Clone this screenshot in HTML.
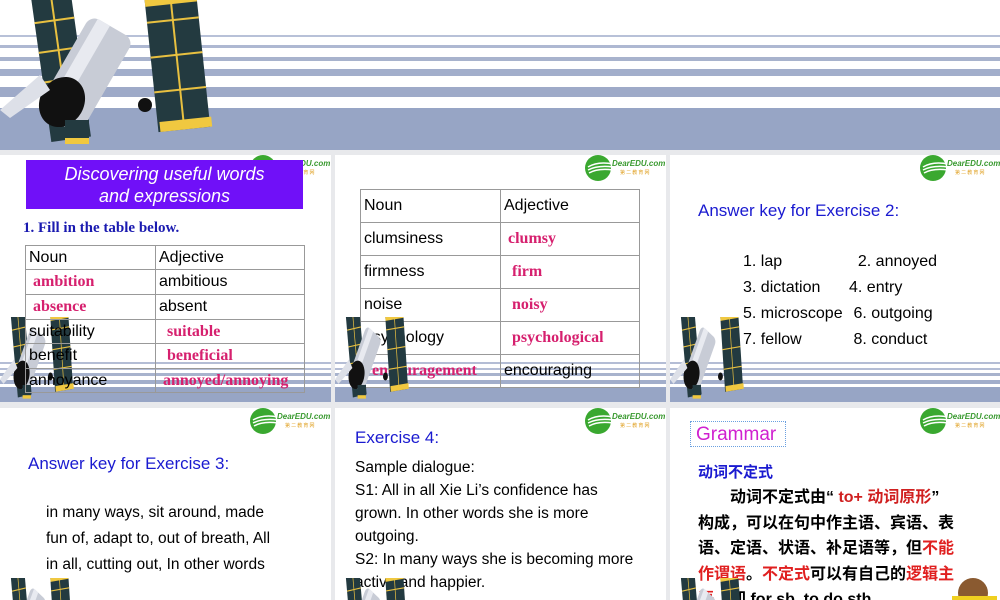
<!DOCTYPE html>
<html><head><meta charset="utf-8"><style>
*{margin:0;padding:0;box-sizing:border-box}
html,body{width:1000px;height:600px;overflow:hidden}
body{background:#e8e9ec;position:relative;font-family:"Liberation Sans","Noto Sans CJK SC",sans-serif}
.a{position:absolute}
.slide{position:absolute;background:#fff;overflow:hidden;width:331px}
.band{position:absolute;left:0;width:331px;top:207px;height:40px;
background:linear-gradient(#fff 0,#fff 0px,#b4bdd5 0px,#b4bdd5 2px,#fff 2px,#fff 6px,#b4bdd5 6px,#b4bdd5 8px,#fff 8px,#fff 11px,#a8b3cd 11px,#a8b3cd 14px,#fff 14px,#fff 18px,#a2aecb 18px,#a2aecb 22px,#fff 22px,#fff 25px,#97a5c5 25px)}
.t{color:#000;font-size:16px}
.r{color:#d6206e;font-family:"Liberation Serif",serif;font-weight:bold;font-size:16px}
table{border-collapse:collapse;position:absolute}
td{border:1px solid #999;padding:0 3px;vertical-align:middle;font-size:16px;white-space:nowrap}
.logo{position:absolute;width:82px;height:28px}
.blue{color:#1a1ad0}
</style></head><body>
<svg width="0" height="0" style="position:absolute"><defs>
<g id="sat">
<rect x="40" y="-10" width="40" height="150" fill="#233a40" transform="rotate(-8 60 60)"/>
<g transform="rotate(-8 60 60)" stroke="#e8c040" stroke-width="2"><line x1="40" y1="20" x2="80" y2="20"/><line x1="40" y1="50" x2="80" y2="50"/><line x1="40" y1="80" x2="80" y2="80"/><line x1="40" y1="110" x2="80" y2="110"/><line x1="60" y1="-10" x2="60" y2="140"/></g>
<rect x="40" y="-20" width="42" height="14" fill="#f0c840" transform="rotate(-8 60 60)"/>
<rect x="150" y="-30" width="52" height="160" fill="#233a40" transform="rotate(-6 175 50)"/>
<g transform="rotate(-6 175 50)" stroke="#e8c040" stroke-width="2"><line x1="150" y1="20" x2="202" y2="20"/><line x1="150" y1="55" x2="202" y2="55"/><line x1="150" y1="90" x2="202" y2="90"/><line x1="176" y1="-30" x2="176" y2="130"/></g>
<rect x="150" y="-10" width="52" height="14" fill="#f0c840" transform="rotate(-6 175 50)"/>
<rect x="152" y="120" width="52" height="10" fill="#f0c840" transform="rotate(-6 175 50)"/>
<rect x="60" y="20" width="50" height="110" rx="10" fill="#c8ccd6" transform="rotate(30 85 75)"/>
<rect x="68" y="20" width="14" height="110" fill="#e8eaf0" transform="rotate(30 85 75)"/>
<ellipse cx="62" cy="102" rx="22" ry="26" fill="#111" transform="rotate(30 62 102)"/>
<polygon points="0,110 40,75 50,90 10,118" fill="#dde0e8"/>
<rect x="65" y="120" width="24" height="22" fill="#233a40"/><rect x="65" y="138" width="24" height="6" fill="#f0c840"/>
<circle cx="145" cy="105" r="7" fill="#111"/>
</g>
<g id="lg">
<circle cx="13" cy="13" r="13" fill="#3aa830"/>
<path d="M3 12 Q13 6 28 9 M3 15 Q13 10 28 12 M4 18 Q13 13 28 15" stroke="#fff" stroke-width="1.5" fill="none"/>
<text x="27" y="11" font-family="Liberation Sans" font-size="8" font-weight="bold" font-style="italic" fill="#3a9a30">DearEDU.com</text>
<text x="35" y="19" font-family="Noto Sans CJK SC" font-size="5" fill="#e0a020">第 二 教 育 网</text>
</g>
</defs></svg>

<div class="a" style="left:0;top:0;width:1000px;height:150px;background:linear-gradient(#fff 0,#fff 35px,#b8c1d8 35px,#b8c1d8 37px,#fff 37px,#fff 45px,#aeb8d2 45px,#aeb8d2 48px,#fff 48px,#fff 57px,#a8b3cd 57px,#a8b3cd 61px,#fff 61px,#fff 69px,#a2aecb 69px,#a2aecb 76px,#fff 76px,#fff 87px,#9eaac8 87px,#9eaac8 97px,#fff 97px,#fff 108px,#97a5c5 108px)"></div>
<svg class="a" style="left:0;top:0" width="230" height="150" viewBox="0 0 230 150"><use href="#sat"/></svg>

<div class="slide" style="left:0;top:155px;height:247px">
<div class="band"></div>
<svg class="a" style="left:0;top:162px" width="80" height="85" viewBox="0 0 230 150" preserveAspectRatio="none"><use href="#sat"/></svg>
<svg class="logo" style="left:250px;top:0px"><use href="#lg"/></svg>
<div class="a" style="left:26px;top:5px;width:277px;height:49px;background:#7010f8;color:#fff;font-style:italic;font-size:18px;text-align:center;line-height:22px;padding-top:3px">Discovering useful words<br>and expressions</div>
<div class="a" style="left:23px;top:65px;color:#1a1ab0;font-family:'Liberation Serif',serif;font-weight:bold;font-size:15px">1. Fill in the table below.</div>
<table style="left:25px;top:90px;width:280px">
<tr style="height:24px"><td style="width:130px">Noun</td><td>Adjective</td></tr>
<tr style="height:25px"><td><span class="r">&nbsp;ambition</span></td><td>ambitious</td></tr>
<tr style="height:25px"><td><span class="r">&nbsp;absence</span></td><td>absent</td></tr>
<tr style="height:24px"><td>suitability</td><td><span class="r">&nbsp;&nbsp;suitable</span></td></tr>
<tr style="height:25px"><td>benefit</td><td><span class="r">&nbsp;&nbsp;beneficial</span></td></tr>
<tr style="height:24px"><td>annoyance</td><td><span class="r">&nbsp;annoyed/annoying</span></td></tr>
</table>
</div>

<div class="slide" style="left:335px;top:155px;height:247px">
<div class="band"></div>
<svg class="logo" style="left:250px;top:0px"><use href="#lg"/></svg>
<table style="left:25px;top:34px;width:280px">
<tr style="height:33px"><td style="width:140px">Noun</td><td>Adjective</td></tr>
<tr style="height:33px"><td>clumsiness</td><td><span class="r">&nbsp;clumsy</span></td></tr>
<tr style="height:33px"><td>firmness</td><td><span class="r">&nbsp;&nbsp;firm</span></td></tr>
<tr style="height:33px"><td>noise</td><td><span class="r">&nbsp;&nbsp;noisy</span></td></tr>
<tr style="height:33px"><td>psychology</td><td><span class="r">&nbsp;&nbsp;psychological</span></td></tr>
<tr style="height:33px"><td><span class="r">&nbsp;&nbsp;encouragement</span></td><td>encouraging</td></tr>
</table>
<svg class="a" style="left:0;top:162px" width="80" height="85" viewBox="0 0 230 150" preserveAspectRatio="none"><use href="#sat"/></svg>
</div>

<div class="slide" style="left:670px;top:155px;height:247px">
<div class="band"></div>
<svg class="a" style="left:0;top:162px" width="80" height="85" viewBox="0 0 230 150" preserveAspectRatio="none"><use href="#sat"/></svg>
<svg class="logo" style="left:250px;top:0px"><use href="#lg"/></svg>
<div class="a blue" style="left:28px;top:46px;font-size:17px">Answer key for Exercise 2:</div>
<div class="a t" style="left:73px;top:94px;line-height:26px">1. lap<br>3. dictation<br>5. microscope<br>7. fellow</div>
<div class="a t" style="left:179px;top:94px;line-height:26px;white-space:pre">  2. annoyed
4. entry
 6. outgoing
 8. conduct</div>
</div>

<div class="slide" style="left:0;top:408px;height:192px">
<svg class="logo" style="left:250px;top:0px"><use href="#lg"/></svg>
<div class="a blue" style="left:28px;top:46px;font-size:17px">Answer key for Exercise 3:</div>
<div class="a t" style="left:46px;top:92px;line-height:26px;font-size:15.5px">in many ways, sit around, made<br>fun of, adapt to, out of breath, All<br>in all, cutting out, In other words</div>
<svg class="a" style="left:0;top:170px" width="80" height="85" viewBox="0 0 230 150" preserveAspectRatio="none"><use href="#sat"/></svg>
</div>

<div class="slide" style="left:335px;top:408px;height:192px">
<svg class="logo" style="left:250px;top:0px"><use href="#lg"/></svg>
<div class="a blue" style="left:20px;top:20px;font-size:17px">Exercise 4:</div>
<div class="a t" style="left:20px;top:48px;line-height:23px;font-size:15.5px;white-space:nowrap">Sample dialogue:<br>S1: All in all Xie Li’s confidence has<br>grown. In other words she is more<br>outgoing.<br>S2: In many ways she is becoming more<br>active and happier.</div>
<svg class="a" style="left:0;top:170px" width="80" height="85" viewBox="0 0 230 150" preserveAspectRatio="none"><use href="#sat"/></svg>
</div>

<div class="slide" style="left:670px;top:408px;height:192px">
<svg class="logo" style="left:250px;top:0px"><use href="#lg"/></svg>
<div class="a" style="left:20px;top:13px;width:96px;height:26px;border:1px dotted #6aa0e0;color:#d020d0;font-size:19px;padding-left:5px;line-height:26px">Grammar</div>
<div class="a" style="left:28px;top:53px;color:#1a1ad0;font-weight:bold;font-size:15px">动词不定式</div>
<div class="a" style="left:28px;top:77px;width:268px;font-size:16px;font-weight:bold;line-height:25.5px;color:#000">　　动词不定式由“ <span style="color:#d02020">to+ 动词原形</span>”<br>构成，可以在句中作主语、宾语、表<br>语、定语、状语、补足语等，但<span style="color:#e02020">不能</span><br><span style="color:#e02020">作谓语</span>。<span style="color:#e02020">不定式</span>可以有自己的<span style="color:#e02020">逻辑主</span><br><span style="color:#e02020">语</span>，即 for sb. to do sth.</div>
<div class="a" style="left:288px;top:170px;width:30px;height:30px;border-radius:50%;background:#8a5a30"></div>
<div class="a" style="left:282px;top:188px;width:45px;height:10px;background:#f0d020"></div>
<svg class="a" style="left:0;top:170px" width="80" height="85" viewBox="0 0 230 150" preserveAspectRatio="none"><use href="#sat"/></svg>
</div>
</body></html>
